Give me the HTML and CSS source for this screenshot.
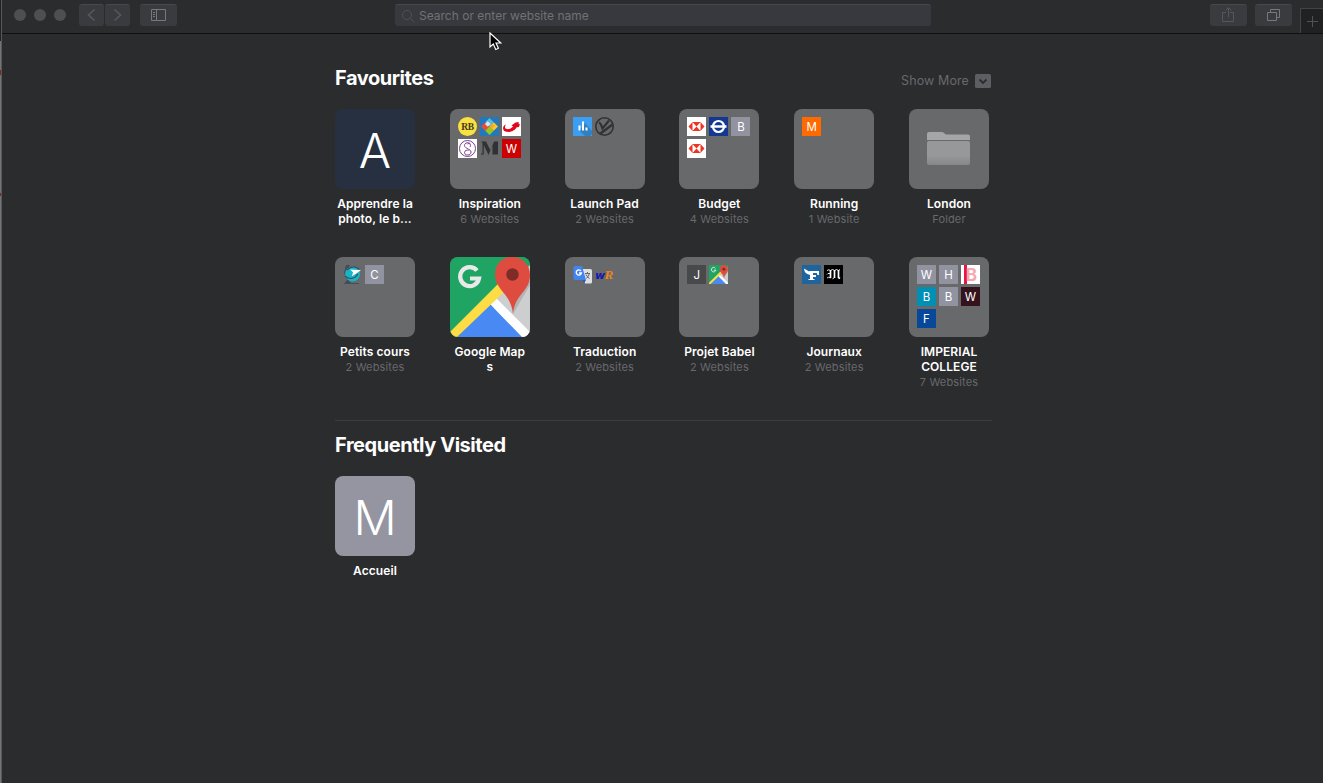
FILE: index.html
```html
<!DOCTYPE html>
<html lang="en">
<head>
<meta charset="utf-8">
<title>Favourites</title>
<link rel="stylesheet" href="styles.css">
</head>
<body>
<svg class="defs" aria-hidden="true">
  <defs>
    <symbol id="maps" viewBox="0 0 80 80">
      <path fill="#1fa463" d="M0 0h80v80H0z"/>
      <path fill="#cdced0" d="M44 44 80 8v72H44z"/>
      <path fill="#4889f4" d="M7 80 40 47l33 33z"/>
      <path fill="#fff" d="m40 47 6-6 34 34v5h-8z"/>
      <path fill="#fddc45" d="M0 75 48 27l6 8L7 80H0z"/>
      <path fill="#b2b3b5" d="m63 57 17-29v-5L64 42z"/>
      <path fill="#de4b3f" d="M45 18C45 7 52 0 62 0s18 7 18 18c0 17-15 18-17 39-2-21-18-24-18-39z"/>
      <circle cx="62.500" cy="17.500" r="6.200" fill="#7f2c28"/>
      <path fill="none" stroke="#e9e9e9" stroke-width="4.200" d="M27 13.500a9.500 9.500 0 1 0 2 8H20"/>
    </symbol>
    <symbol id="hex" viewBox="0 0 19 19">
      <path fill="#fff" d="M0 0h19v19H0z"/>
      <path fill="#ee3524" d="M5.500 5h8l4 4.500-4 4.500h-8l-4-4.500z"/>
      <path fill="#fff" d="M5.500 5v9l8-9v9z"/>
    </symbol>
  </defs>
</svg>

<div class="window">
  <header class="toolbar">
    <div class="lights"><i></i><i></i><i></i></div>
    <div class="nav">
      <button class="btn btn-nav"><svg width="26" height="22" viewBox="0 0 26 22"><path d="m15.500 5.500-6 5.500 6 5.500"/></svg></button>
      <button class="btn btn-nav"><svg width="26" height="22" viewBox="0 0 26 22"><path d="m9.500 5.500 6 5.500-6 5.500"/></svg></button>
    </div>
    <button class="btn btn-side"><svg width="37" height="22" viewBox="0 0 37 22"><path d="M11.500 5.500h14v11h-14zM16.500 5.500v11M13 8.500h2M13 10.500h2M13 12.500h2"/></svg></button>
    <div class="search">
      <svg width="14" height="14" viewBox="0 0 14 14"><circle cx="6" cy="6" r="4.500"/><path d="m9.500 9.500 3.500 3.500"/></svg>
      <span>Search or enter website name</span>
    </div>
    <button class="btn btn-share"><svg width="37" height="22" viewBox="0 0 37 22"><path d="M16 8.500h-3.500v9h11v-9H20M18.500 13V4M15.500 6.500l3-3 3 3"/></svg></button>
    <button class="btn btn-tabs"><svg width="37" height="22" viewBox="0 0 37 22"><path d="M12.500 8.500h9v8h-9zM15.500 8V5.500h9v8H22"/></svg></button>
    <div class="newtab"><svg width="22" height="24" viewBox="0 0 22 24"><path d="M11.500 7v11M6 12.500h11"/></svg></div>
  </header>

  <main class="content">
    <section>
      <div class="head">
        <h2 class="title">Favourites</h2>
        <div class="more">Show More<svg width="16" height="14" viewBox="0 0 16 14"><rect width="16" height="14" rx="1.500" fill="#5d5e61"/><path d="m4.500 5.500 3.500 3.500 3.500-3.500" fill="none" stroke="#2b2c2e" stroke-width="1.800"/></svg></div>
      </div>
      <div class="grid">
        <div class="site">
          <div class="tile tile-navy">A</div>
          <b>Apprendre la<br>photo, le b...</b>
        </div>
        <div class="site">
          <div class="tile folder">
            <svg viewBox="0 0 19 19"><circle cx="9.500" cy="9.500" r="9.500" fill="#fae041"/><text x="9.500" y="13" class="rb">RB</text></svg>
            <svg viewBox="0 0 19 19"><rect width="19" height="19" rx="1" fill="#2179bb"/><g transform="rotate(45 9.500 9.500)"><path fill="#59b9df" d="M3.500 3.500h6v6h-6z"/><path fill="#fbc52d" d="M9.500 3.500h6v6h-6z"/><path fill="#f6a91c" d="M9.500 9.500v-4h3v4z"/><path fill="#e94b35" d="M3.500 9.500h6v6h-6z"/><path fill="#d5e5ef" d="M4.500 7h4v4h-4z"/><path fill="#9dc51c" d="M9.500 9.500h6v6h-6z"/></g></svg>
            <svg viewBox="0 0 19 19"><path fill="#fff" d="M0 0h19v19H0z"/><path fill="#e3061c" d="M4 7.500C.5 8.500-.2 13 3.500 14.500c4.500 1.500 9.500-1 11.200-4.300l2.300-.2.800-3-1.300-.3.200-1.700-3.200.5-4 3 1.700 1C9 11.500 7 12.500 4.800 12 2.500 11.500 2.500 9.500 4 7.500z"/></svg>
            <svg viewBox="0 0 19 19"><path fill="#fff" d="M0 0h19v19H0z"/><g fill="none" stroke="#783e8c"><circle cx="9.500" cy="9.500" r="8"/><path d="M12.500 5c-1.500-2-6-1.500-6 1.500s6.500 3.500 6.500 6.500c0 4-6.500 4-6.500.5 0-2 3-3 4-2M9.500 5c2-1.500 4 1 2.500 3"/></g></svg>
            <svg viewBox="0 0 19 19"><path fill="#303133" d="M1 2.500h5l4.500 9 3.500-9h4v13h-5.500V6L8.500 16 3.800 6v9.500H1v-1h1.500V4z"/></svg>
            <span class="chip red">W</span>
          </div>
          <b>Inspiration</b><small>6 Websites</small>
        </div>
        <div class="site">
          <div class="tile folder">
            <svg viewBox="0 0 19 19"><path fill="#3a9ff3" d="M0 0h19v19H0z"/><path fill="#327fc1" d="M6 13 12 19h5l2-2v-3l-7-8-2 4z"/><path stroke="#fff" stroke-width="2" d="M6.500 13.500v-5M10 13.500v-9M13.500 13.500v-3"/></svg>
            <svg viewBox="0 0 19 19" fill="none" stroke="#303234" stroke-width="1.600"><circle cx="9.500" cy="9.500" r="8.700"/><path stroke-width="2.200" d="M4 5.500c1.500.5 2.500 3 3.500 6L14 3.500M5.500 16.500l4-3 8-6"/></svg>
          </div>
          <b>Launch Pad</b><small>2 Websites</small>
        </div>
        <div class="site">
          <div class="tile folder">
            <svg viewBox="0 0 19 19"><use href="#hex"/></svg>
            <svg viewBox="0 0 19 19"><path fill="#123891" d="M0 0h19v19H0z"/><circle cx="9.500" cy="9.500" r="5.500" fill="none" stroke="#fff" stroke-width="2.200"/><path fill="#fff" d="M1.500 8.300h16v2.500h-16z"/></svg>
            <span class="chip">B</span>
            <svg viewBox="0 0 19 19"><use href="#hex"/></svg>
          </div>
          <b>Budget</b><small>4 Websites</small>
        </div>
        <div class="site">
          <div class="tile folder"><span class="chip orange">M</span></div>
          <b>Running</b><small>1 Website</small>
        </div>
        <div class="site">
          <div class="tile tile-plain">
            <svg width="44" height="34" viewBox="0 0 44 34"><defs><linearGradient id="fg" x2="0" y2="1"><stop offset=".6" stop-color="#97989a"/><stop offset="1" stop-color="#868789"/></linearGradient></defs><path fill="#a5a6a8" d="M0 8V2Q0 0 2 0h13q1 0 2 1l2 1.500h22q2 0 2 2V8z"/><path fill="url(#fg)" d="M0 11q0-2 2-2h39q2 0 2 2v20q0 2-2 2H2q-2 0-2-2z"/></svg>
          </div>
          <b>London</b><small>Folder</small>
        </div>
        <div class="site">
          <div class="tile folder">
            <svg viewBox="0 0 19 19"><path fill="#454b59" d="M3 0h4L5 4l-1 9 4 5h8v1H1l3-4L1 8z"/><circle cx="9.500" cy="9" r="7.500" fill="#18b3c7"/><path fill="none" stroke="#38505f" stroke-width="1.200" d="M2 11c4 4 10 3 13-2M4 5c4-4 8-4 12-1"/><path fill="#fff" d="m7 4.500 11 .8-9 6 1-4z"/></svg>
            <span class="chip">C</span>
          </div>
          <b>Petits cours</b><small>2 Websites</small>
        </div>
        <div class="site">
          <div class="tile tile-map"><svg width="80" height="80"><use href="#maps"/></svg></div>
          <b>Google Map<br>s</b>
        </div>
        <div class="site">
          <div class="tile folder">
            <svg viewBox="0 0 19 19"><path fill="#dedfe1" d="M8 4h9.500q1.500 0 1.500 1.500V17q0 1.500-1.500 1.500H12z"/><path fill="#4285f0" d="M1.500 1H9l4 14H2q-1.500 0-1.500-1.500V2z"/><path fill="#2450c0" d="M10 15h3l-2 3z"/><path fill="none" stroke="#fff" stroke-width="1.300" d="M8 6a2.600 2.600 0 1 0 .4 2H6"/><path fill="none" stroke="#67696c" d="M12 8.500h5M14.500 7v1.500M16.500 8.500q-1 3-3 5M13 9.500q1 2.500 3.500 4"/></svg>
            <svg viewBox="0 0 19 19"><text x="0" y="14" class="wr">w<tspan class="wr-r">R</tspan></text></svg>
          </div>
          <b>Traduction</b><small>2 Websites</small>
        </div>
        <div class="site">
          <div class="tile folder">
            <span class="chip dark">J</span>
            <svg viewBox="0 0 80 80"><use href="#maps"/></svg>
          </div>
          <b>Projet Babel</b><small>2 Websites</small>
        </div>
        <div class="site">
          <div class="tile folder">
            <svg viewBox="0 0 19 19"><path fill="#1e649f" d="M0 0h19v19H0z"/><path fill="#fff" d="M7 6h10v4h-1.500l-.7-2H11v2h3v2h-3v2h1.500v1H6.500v-1H8V10C4 9 2 7 2 3.500L8 7z"/></svg>
            <svg viewBox="0 0 19 19"><path fill="#000" d="M0 0h19v19H0z"/><path fill="none" stroke="#fff" stroke-width="1.700" d="M6.500 5v8M10.500 5v8M14.500 5v7.500l1.500 1"/><path fill="none" stroke="#fff" stroke-width=".9" d="M3 5.500q2-1.500 3.500 0l2-1 2 1 2-1 2 1 1.500-1M3 9.500q.5-1.500 3-1M3 13q1.500-1.500 3.500 0M10 13l-1.500.8"/></svg>
          </div>
          <b>Journaux</b><small>2 Websites</small>
        </div>
        <div class="site">
          <div class="tile folder">
            <span class="chip">W</span><span class="chip">H</span>
            <span class="chip bbb">B</span>
            <span class="chip teal">B</span><span class="chip">B</span><span class="chip wine">W</span>
            <span class="chip blue">F</span>
          </div>
          <b>IMPERIAL<br>COLLEGE</b><small>7 Websites</small>
        </div>
      </div>
    </section>
    <section class="frequent">
      <h2 class="title">Frequently Visited</h2>
      <div class="site">
        <div class="tile tile-grey">M</div>
        <b>Accueil</b>
      </div>
    </section>
  </main>
</div>
<svg class="cursor" width="13" height="19" viewBox="0 0 13 19"><path d="M1 1v14l3.300-3 2.500 5.500 2.600-1.200L7 11h4.800z" fill="#000" stroke="#fff" stroke-width="1.200"/></svg>
</body>
</html>
```
FILE: styles.css
```css
* { box-sizing: border-box; }
body {
  margin: 0;
  height: 783px;
  overflow: hidden;
  background: linear-gradient(#202123 41px, #737476 41px 70px, #7d2521 70px 75px, #737476 75px 193px, #7d2521 193px 196px, #737476 196px);
  font-family: Inter, "Liberation Sans", sans-serif;
}
.defs { position: absolute; width: 0; height: 0; }
.window {
  height: 783px;
  margin-left: 1px;
  border-left: 1px solid #58595b;
  background: #2b2c2e;
}
.toolbar {
  display: flex;
  align-items: flex-start;
  height: 34px;
  padding: 4px 0 0 12px;
  border-bottom: 1px solid #101012;
}
.lights { display: flex; gap: 8px; padding-top: 5px; }
.lights i { width: 12px; height: 12px; border-radius: 50%; background: #4e4f51; }
.nav { display: flex; gap: 1px; margin-left: 13px; }
.btn {
  flex: none;
  display: block;
  height: 22px;
  padding: 0;
  border: 0;
  border-top: 1px solid #48494c;
  border-radius: 3px;
  background: #3a3b3f;
}
.btn svg { display: block; margin-top: -1px; fill: none; stroke: #77787a; }
.btn-nav { width: 25px; }
.btn-nav svg { stroke: #57585b; stroke-width: 1.6; }
.btn-side { width: 37px; margin-left: 10px; }
.btn-share { width: 37px; margin-left: 279px; }
.btn-share svg { stroke: #56575a; }
.btn-tabs { width: 37px; margin-left: 8px; }
.search {
  flex: none;
  display: flex;
  align-items: center;
  gap: 4px;
  width: 536px;
  height: 22px;
  margin-left: 218px;
  padding-left: 6px;
  border-top: 1px solid #48494c;
  border-radius: 3px;
  background: #38393f;
  color: #707174;
  font-size: 12px;
  white-space: nowrap;
}
.search svg { fill: none; stroke: #505155; }
.newtab {
  width: 23px;
  height: 25px;
  margin: 4px 0 0 8px;
  border: solid #434446;
  border-width: 1px 0 0 1px;
  background: #202122;
}
.newtab svg { display: block; stroke: #505153; }
.content { width: 657px; margin-left: 333px; }
.head { display: flex; justify-content: space-between; padding-top: 32px; }
.title {
  margin: 0;
  color: #fff;
  font-size: 20px;
  font-weight: 700;
  line-height: 24px;
  letter-spacing: -.45px;
  white-space: nowrap;
}
.more {
  display: flex;
  align-items: center;
  gap: 6px;
  height: 20px;
  margin: 4px 1px 0 0;
  padding-top: 1px;
  color: #68696c;
  font-size: 12.5px;
  line-height: 20px;
  letter-spacing: .1px;
}
.grid {
  display: grid;
  grid-template-columns: repeat(6, 80px);
  grid-auto-rows: 148px;
  column-gap: 34.8px;
  margin-top: 19px;
}
.site { width: 80px; text-align: center; white-space: nowrap; }
.site b {
  display: block;
  margin: 7px -10px 0;
  color: #fff;
  font-size: 12px;
  font-weight: 600;
  line-height: 15px;
  letter-spacing: .08px;
}
.site small {
  display: block;
  padding-top: 1px;
  color: #68696c;
  font-size: 11px;
  line-height: 15px;
  letter-spacing: .15px;
}
.tile {
  width: 80px;
  height: 80px;
  border-radius: 8px;
  overflow: hidden;
  background: #68696b;
  color: #fff;
  font-size: 48px;
  font-weight: 300;
  line-height: 84px;
}
.tile-navy { background: #273040; }
.tile-grey { background: #9495a1; }
.tile-map svg { display: block; }
.tile-plain { display: flex; align-items: center; justify-content: center; }
.folder {
  display: grid;
  grid-template-columns: repeat(3, 19px);
  grid-auto-rows: 19px;
  gap: 3px;
  padding: 8px;
}
.folder > svg { display: block; width: 19px; height: 19px; }
.chip {
  background: #9293a0;
  font-size: 11.5px;
  font-weight: 400;
  line-height: 20px;
}
.red { background: #cc0000; }
.orange { background: #ff6a00; }
.dark { background: #48494b; }
.teal { background: #008fb5; }
.wine { background: #35131c; }
.blue { background: #07489a; }
.bbb {
  background: linear-gradient(90deg, #fff 3px, #e71938 3px 6px, #fff 6px);
  color: #f4a9ad;
  font-size: 17px;
  font-weight: 700;
  padding-left: 2px;
}
.rb { fill: #3c3920; font: 700 9.5px "Liberation Serif", serif; text-anchor: middle; letter-spacing: -.3px; }
.wr { fill: #1515b5; font: italic 700 11px "DejaVu Sans", sans-serif; letter-spacing: -.8px; }
.wr-r { fill: #ee8518; font: italic 700 13px "Liberation Serif", serif; }
.frequent { margin-top: 15px; border-top: 1px solid #3c3d3f; padding-top: 12px; }
.frequent .site { margin-top: 19px; }
.cursor { position: absolute; left: 489px; top: 32px; }
```
